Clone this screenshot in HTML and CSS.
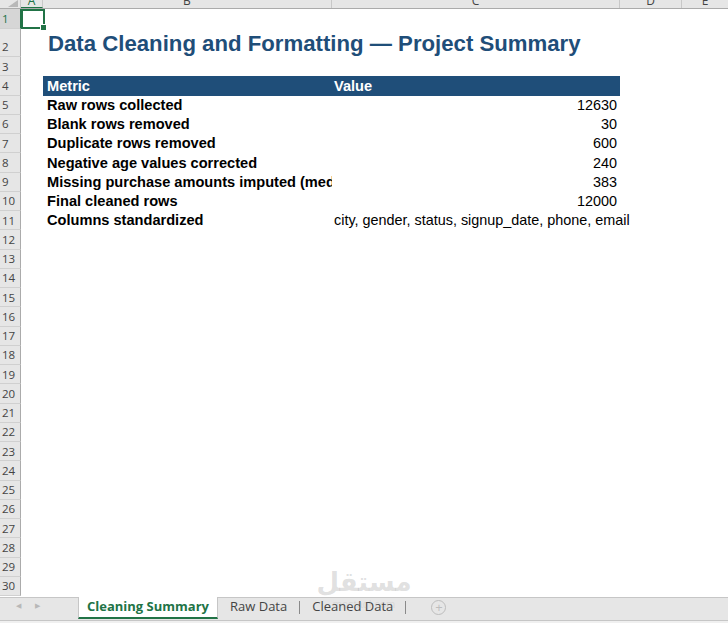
FILE: index.html
```html
<!DOCTYPE html>
<html>
	<head>
		<meta charset="UTF-8">
		<title>Cleaning Summary</title>
		<link rel="stylesheet" href="styles.css">
	</head>
	<body>
		<div class="sheet">
			<div class="row colhead">
				<div class="corner"></div>
				<div class="ch ch-sel">A</div>
				<div class="ch">B</div>
				<div class="ch">C</div>
				<div class="ch">D</div>
				<div class="ch ch-last">E</div>
			</div>

			<div class="row r1">
				<div class="rh rh-sel">1</div>
				<div class="cell cell-a"><div class="selbox"><span class="handle"></span></div></div>
				<div class="cell"></div><div class="cell"></div><div class="cell"></div><div class="cell"></div>
			</div>
			<div class="row r2">
				<div class="rh">2</div>
				<div class="cell"></div>
				<div class="cell title">Data Cleaning and Formatting — Project Summary</div>
				<div class="cell"></div><div class="cell"></div><div class="cell"></div>
			</div>
			<div class="row">
				<div class="rh">3</div>
				<div class="cell"></div><div class="cell"></div><div class="cell"></div><div class="cell"></div><div class="cell"></div>
			</div>
			<div class="row">
				<div class="rh">4</div>
				<div class="cell"></div>
				<div class="cell th">Metric</div>
				<div class="cell th th-val">Value</div>
				<div class="cell"></div><div class="cell"></div>
			</div>
			<div class="row">
				<div class="rh">5</div>
				<div class="cell"></div>
				<div class="cell metric">Raw rows collected</div>
				<div class="cell num">12630</div>
				<div class="cell"></div><div class="cell"></div>
			</div>
			<div class="row">
				<div class="rh">6</div>
				<div class="cell"></div>
				<div class="cell metric">Blank rows removed</div>
				<div class="cell num">30</div>
				<div class="cell"></div><div class="cell"></div>
			</div>
			<div class="row">
				<div class="rh">7</div>
				<div class="cell"></div>
				<div class="cell metric">Duplicate rows removed</div>
				<div class="cell num">600</div>
				<div class="cell"></div><div class="cell"></div>
			</div>
			<div class="row">
				<div class="rh">8</div>
				<div class="cell"></div>
				<div class="cell metric">Negative age values corrected</div>
				<div class="cell num">240</div>
				<div class="cell"></div><div class="cell"></div>
			</div>
			<div class="row">
				<div class="rh">9</div>
				<div class="cell"></div>
				<div class="cell metric clip">Missing purchase amounts imputed (median)</div>
				<div class="cell num">383</div>
				<div class="cell"></div><div class="cell"></div>
			</div>
			<div class="row">
				<div class="rh">10</div>
				<div class="cell"></div>
				<div class="cell metric">Final cleaned rows</div>
				<div class="cell num">12000</div>
				<div class="cell"></div><div class="cell"></div>
			</div>
			<div class="row">
				<div class="rh">11</div>
				<div class="cell"></div>
				<div class="cell metric">Columns standardized</div>
				<div class="cell txt">city, gender, status, signup_date, phone, email</div>
				<div class="cell"></div><div class="cell"></div>
			</div>
			<div class="row"><div class="rh">12</div></div>
			<div class="row"><div class="rh">13</div></div>
			<div class="row"><div class="rh">14</div></div>
			<div class="row"><div class="rh">15</div></div>
			<div class="row"><div class="rh">16</div></div>
			<div class="row"><div class="rh">17</div></div>
			<div class="row"><div class="rh">18</div></div>
			<div class="row"><div class="rh">19</div></div>
			<div class="row"><div class="rh">20</div></div>
			<div class="row"><div class="rh">21</div></div>
			<div class="row"><div class="rh">22</div></div>
			<div class="row"><div class="rh">23</div></div>
			<div class="row"><div class="rh">24</div></div>
			<div class="row"><div class="rh">25</div></div>
			<div class="row"><div class="rh">26</div></div>
			<div class="row"><div class="rh">27</div></div>
			<div class="row"><div class="rh">28</div></div>
			<div class="row"><div class="rh">29</div></div>
			<div class="row"><div class="rh">30</div></div>
		</div>

		<div class="tabs">
			<div class="nav">
				<span class="arrow">&#9664;</span>
				<span class="arrow">&#9654;</span>
			</div>
			<div class="tab tab-on">Cleaning Summary</div>
			<div class="tab">Raw Data</div>
			<span class="sep"></span>
			<div class="tab">Cleaned Data</div>
			<span class="sep"></span>
			<div class="add">+</div>
		</div>
		<div class="status"></div>

		<div class="mark">
			<span class="mark-ar">مستقل</span>
			<span class="mark-en">mostaql.com</span>
		</div>
	</body>
</html>
```

FILE: styles.css
```css
html,body{
	margin:0;
	padding:0;
}
body{
	width:728px;
	height:623px;
	overflow:hidden;
	background:#fff;
	font-family:"Liberation Sans", Arial, sans-serif;
	position:relative;
}

.sheet{
	height:597px;
	overflow:hidden;
}

.row{
	display:grid;
	grid-template-columns:21px 22px 289px 288px 62px 1fr;
	height:19.25px;
}

/* column header strip */
.colhead{
	height:9px;
	background:#e6e6e6;
	border-bottom:1px solid #ababab;
	box-sizing:border-box;
	overflow:hidden;
}
.corner{
	border-right:1px solid #c8c8c8;
	position:relative;
}
.corner:after{
	content:"";
	position:absolute;
	right:2px;
	bottom:1px;
	border-left:10px solid transparent;
	border-bottom:7px solid #b8b8b8;
}
.ch{
	border-right:1px solid #c8c8c8;
	font-family:"Open Sans", sans-serif;
	font-size:12px;
	line-height:12px;
	color:#444;
	text-align:center;
	margin-top:-5px;
}
.ch-sel{
	color:#217346;
	border-bottom:1px solid #217346;
}
.ch-last{
	border-right:none;
}

/* row headers */
.rh{
	background:#e6e6e6;
	border-right:1px solid #ababab;
	border-bottom:1px solid #d0d0d0;
	box-sizing:border-box;
	font-family:"Open Sans", sans-serif;
	font-size:11.5px;
	color:#444;
	display:flex;
	align-items:center;
	padding-left:2px;
}
.rh-sel{
	color:#217346;
	background:#d6d6d6;
	border-right:1px solid #217346;
}

.r1{
	height:20px;
}
.r2{
	height:28px;
}
.r2 .rh{
	align-items:flex-end;
	padding-bottom:2px;
}

.cell{
	white-space:nowrap;
	font-size:14.6px;
	color:#000;
	display:flex;
	align-items:flex-end;
	padding-bottom:2px;
	box-sizing:border-box;
	min-width:0;
}

.cell-a{
	position:relative;
}
.selbox{
	position:absolute;
	left:0;
	top:0;
	width:24px;
	height:20px;
	border:2px solid #217346;
	box-sizing:border-box;
}
.handle{
	position:absolute;
	right:-4px;
	bottom:-4px;
	width:5px;
	height:5px;
	background:#217346;
	border:1px solid #fff;
}

.title{
	font-size:22.2px;
	font-weight:bold;
	color:#1f4e79;
	padding-left:5px;
	padding-bottom:0;
	overflow:visible;
}

.th{
	background:#1f4e79;
	color:#fff;
	font-weight:bold;
	padding-left:4px;
}
.th-val{
	padding-left:2px;
}

.metric{
	font-weight:bold;
	padding-left:4px;
}
.clip{
	overflow:hidden;
}
.num{
	font-size:14.4px;
	justify-content:flex-end;
	padding-right:3px;
}
.txt{
	font-size:14.4px;
	padding-left:2px;
	overflow:visible;
}

/* sheet tabs */
.tabs{
	height:22px;
	background:#e6e6e6;
	border-top:1px solid #c6c6c6;
	display:flex;
	align-items:flex-start;
	font-family:"Open Sans", sans-serif;
	font-size:13px;
	color:#444;
}
.nav{
	width:78px;
	display:flex;
	gap:14px;
	padding-left:16px;
	padding-top:3px;
	box-sizing:border-box;
}
.arrow{
	font-size:7px;
	color:#b8b8b8;
}
.tab{
	padding:0 12px;
	line-height:17px;
}
.tab-on{
	background:#fff;
	color:#217346;
	font-weight:bold;
	width:140px;
	box-sizing:border-box;
	text-align:center;
	padding:0;
	height:22px;
	margin-top:-1px;
	line-height:19px;
	border-left:1px solid #c6c6c6;
	border-right:1px solid #c6c6c6;
	border-bottom:2px solid #217346;
}
.sep{
	width:1px;
	height:13px;
	margin-top:3px;
	background:#8a8a8a;
}
.add{
	margin-left:25px;
	margin-top:2px;
	width:13px;
	height:13px;
	border:1px solid #bdbdbd;
	border-radius:50%;
	color:#bdbdbd;
	font-size:13px;
	line-height:13px;
	text-align:center;
}

.status{
	height:3px;
	background:#f0f0f0;
	border-top:1px solid #c6c6c6;
}

/* watermark */
.mark{
	position:absolute;
	left:318px;
	top:566px;
	width:92px;
	display:flex;
	flex-direction:column;
	align-items:center;
	pointer-events:none;
}
.mark-ar{
	font-family:"DejaVu Sans", sans-serif;
	font-weight:bold;
	font-size:26px;
	line-height:32px;
	color:rgba(150,150,150,0.3);
}
.mark-en{
	font-family:"Liberation Sans", sans-serif;
	font-size:11px;
	line-height:12px;
	color:rgba(150,150,150,0.2);
}
```
